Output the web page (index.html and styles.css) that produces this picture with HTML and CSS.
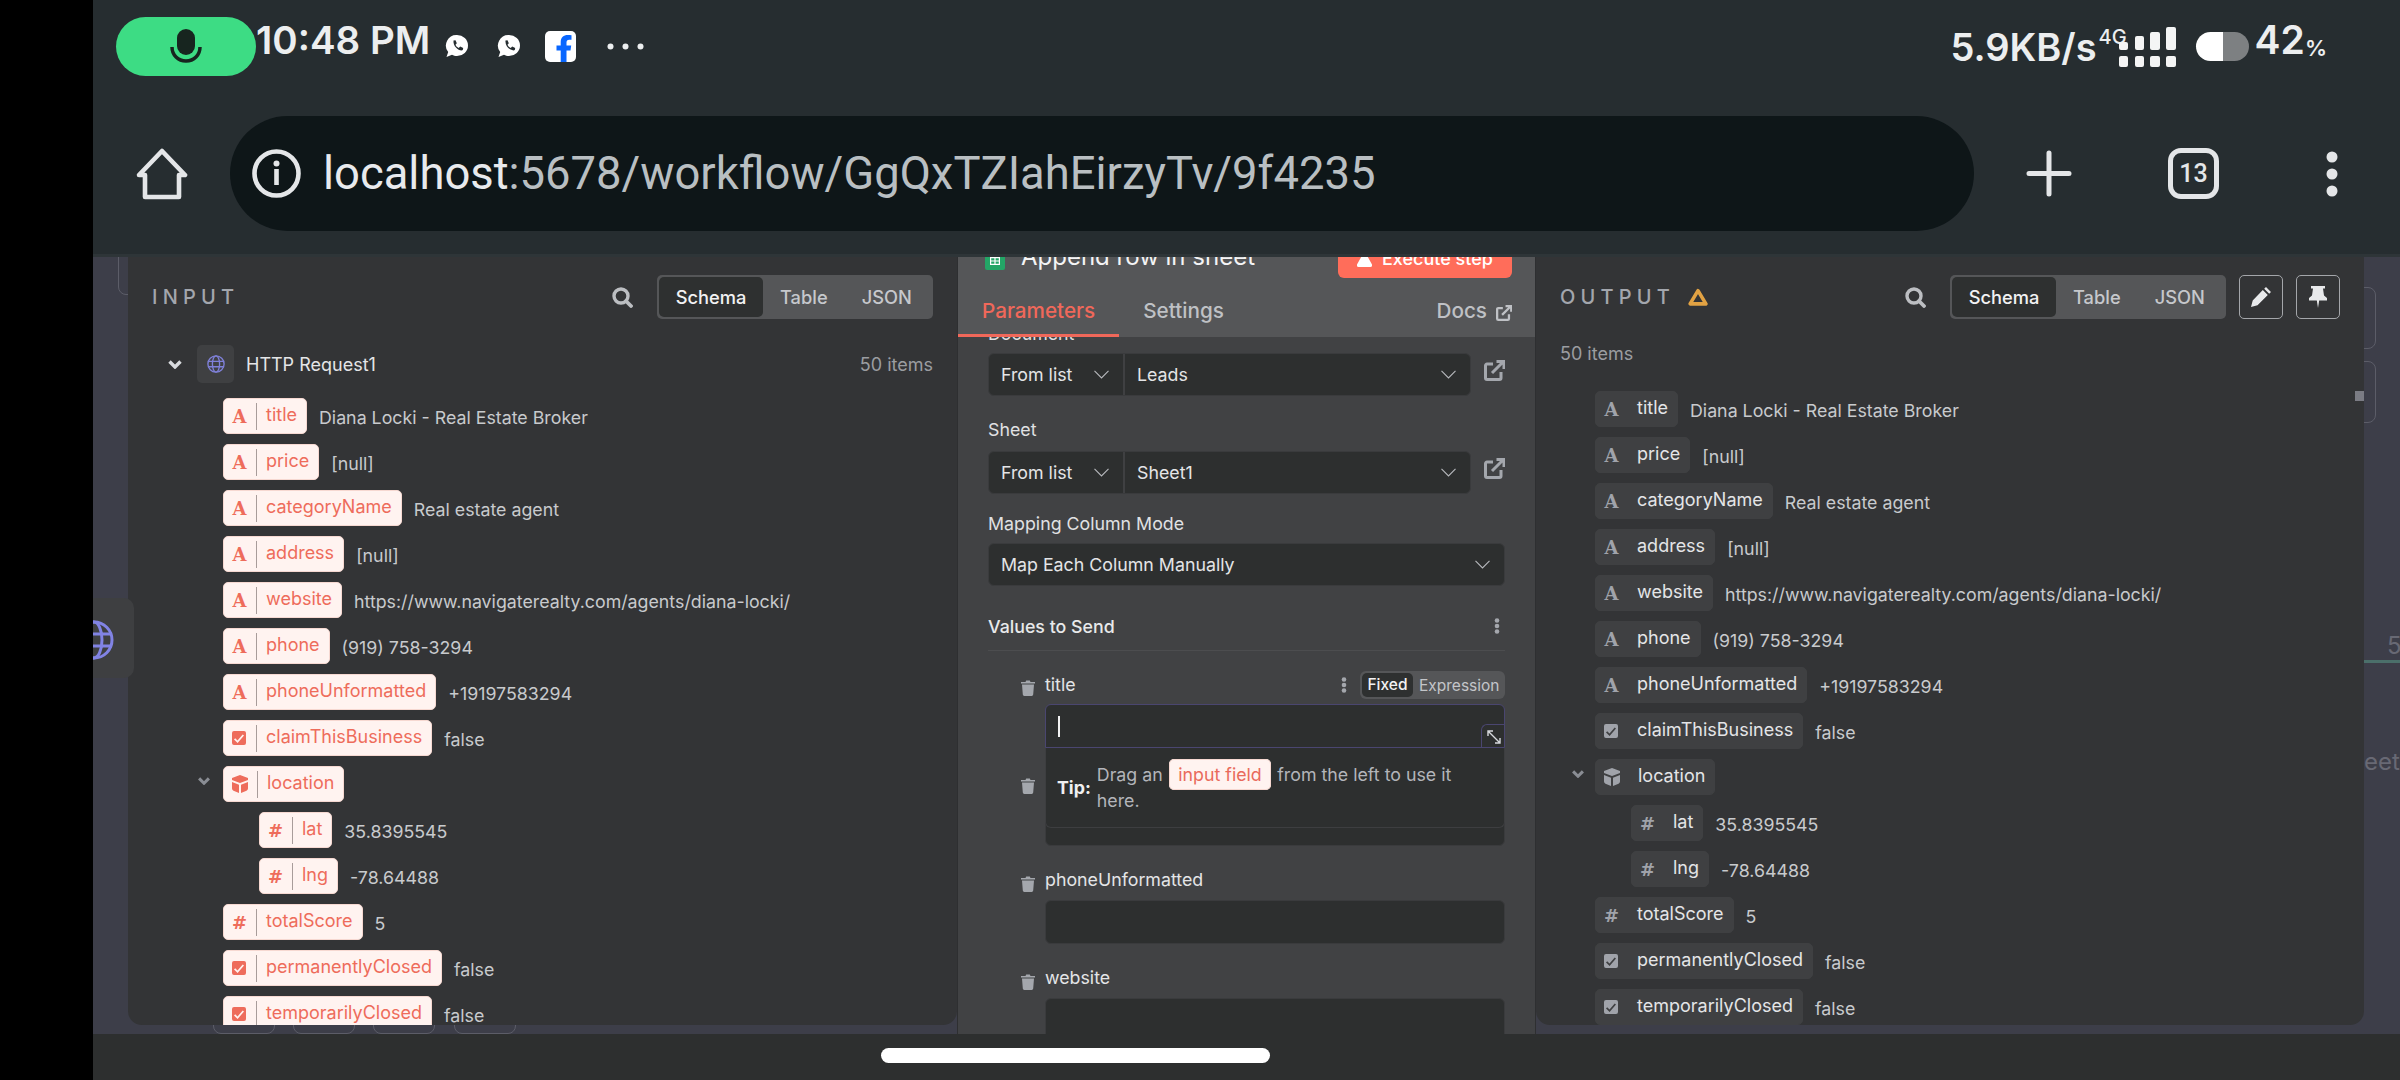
FILE: index.html
```html
<!DOCTYPE html>
<html lang="en">
<head>
    <meta charset="UTF-8">
    <title>Append row in sheet</title>
    <link rel="stylesheet" href="styles.css">
</head>
<body>
<svg class="defs" width="0" height="0">
    <symbol id="i-check" viewBox="0 0 14 16"><path fill="currentColor" fill-rule="evenodd" d="M2 1h10a2 2 0 0 1 2 2v10a2 2 0 0 1-2 2H2a2 2 0 0 1-2-2V3a2 2 0 0 1 2-2zm1.2 7.2L2 9.6 5.6 13 12 5.6 10.7 4.4 5.5 10.4z"/></symbol>
    <symbol id="i-cube" viewBox="0 0 16 18"><path fill="currentColor" d="M8 0l8 3v2L8 8 0 5V3zM0 7l7 2.700V18l-5.500-2.200A2.400 2.400 0 0 1 0 13.600zM16 7v6.600a2.400 2.400 0 0 1-1.500 2.200L9 18V9.700z"/></symbol>
    <symbol id="i-chev" viewBox="0 0 14 9"><path fill="none" stroke="currentColor" stroke-width="3.400" d="M1.500 1.500L7 7l5.500-5.500"/></symbol>
    <symbol id="i-down" viewBox="0 0 15 9"><path fill="none" stroke="currentColor" stroke-width="1.100" d="M.5.800L7.500 8l7-7.200"/></symbol>
    <symbol id="i-search" viewBox="0 0 21 21"><circle cx="9" cy="9" r="7" fill="none" stroke="currentColor" stroke-width="3.400"/><path stroke="currentColor" stroke-width="3.800" stroke-linecap="round" d="M14 14l5 5"/></symbol>
    <symbol id="i-ext" viewBox="0 0 21 21"><path fill="none" stroke="currentColor" stroke-width="3" d="M9 4H3a1.500 1.500 0 0 0-1.500 1.500V18A1.500 1.500 0 0 0 3 19.500h12.500A1.500 1.500 0 0 0 17 18v-6M8 13L19 2M12.500 1.500h7.500V9"/></symbol>
    <symbol id="i-dots" viewBox="0 0 6 16"><circle cx="3" cy="2.500" r="2.300" fill="currentColor"/><circle cx="3" cy="8" r="2.300" fill="currentColor"/><circle cx="3" cy="13.500" r="2.300" fill="currentColor"/></symbol>
    <symbol id="i-trash" viewBox="0 0 14 16"><path fill="currentColor" d="M0 2h4.500l.7-1.500h3.600L9.500 2H14v1.500H0zM1 4.500h12l-.8 10.100a1.500 1.500 0 0 1-1.500 1.400H3.300a1.500 1.500 0 0 1-1.500-1.400z"/></symbol>
    <symbol id="i-globe" viewBox="0 0 40 40"><g fill="none" stroke="currentColor" stroke-width="3"><circle cx="20" cy="20" r="18"/><ellipse cx="20" cy="20" rx="8" ry="18"/><path d="M2 14h36M2 26h36"/></g></symbol>
    <symbol id="i-wa" viewBox="0 0 24 24"><path fill="#fff" d="M12 1a11 10.500 0 0 1 0 21c-2 0-3.500-.4-5-1.200L1.500 23l1.700-5A10.500 10.500 0 0 1 12 1z"/><path fill="#262d30" d="M8.500 6.500l2 -.3 1.300 3-1.300 1.500c.6 1.500 1.700 2.500 3.200 3.200l1.500-1.300 3 1.500-.4 2c-3 1.500-10-3-9.300-9.600z"/></symbol>
</svg>

<div class="screen">
    <div class="edge"></div>
    <div class="phone">
        <div class="statusbar">
            <div class="mic">
                <svg width="32" height="34" viewBox="0 0 32 34"><rect x="7" y="0" width="18" height="26" rx="9" fill="#17251f"/><path d="M2 18c0 8 6 14 14 14s14-6 14-14" fill="none" stroke="#17251f" stroke-width="3.500"/></svg>
            </div>
            <span class="clock">10:48 PM</span>
            <svg class="wa wa-first" width="24" height="24"><use href="#i-wa"/></svg>
            <svg class="wa wa-second" width="24" height="24"><use href="#i-wa"/></svg>
            <svg class="fb" width="31" height="31" viewBox="0 0 31 31"><rect width="31" height="31" rx="5" fill="#fff"/><path fill="#0866ff" d="M21.500 31V19.500h4l.7-5h-4.700v-3c0-1.500.7-2.700 2.800-2.700H26.500V4.200C25.500 4 24 4 22.800 4c-4.200 0-7.100 2.600-7.100 7.100v3.400H11.500v5h4.200V31z"/></svg>
            <svg class="more" width="37" height="7" viewBox="0 0 37 7"><circle cx="3.500" cy="3.500" r="3" fill="#eceeef"/><circle cx="18.500" cy="3.500" r="3" fill="#eceeef"/><circle cx="33.500" cy="3.500" r="3" fill="#eceeef"/></svg>
            <div class="status-right">
                <span class="speed">5.9KB/s</span>
                <span class="net">4G</span>
                <svg class="signal" width="57" height="40" viewBox="0 0 57 40">
                    <g fill="#f4f5f5">
                        <rect x="0" y="15" width="9" height="8" rx="2"/><rect x="16" y="9" width="9" height="14" rx="2"/><rect x="31" y="5" width="10" height="18" rx="2"/><rect x="47" y="0" width="10" height="23" rx="2"/>
                        <rect x="0" y="29" width="9" height="11" rx="2"/><rect x="16" y="29" width="9" height="11" rx="2"/><rect x="31" y="29" width="10" height="11" rx="2"/><rect x="47" y="29" width="10" height="11" rx="2"/>
                    </g>
                </svg>
                <div class="battery"></div>
                <span class="level">42</span><span class="pct">%</span>
            </div>
        </div>

        <div class="toolbar">
            <svg class="home" width="52" height="52" viewBox="0 0 52 52"><path fill="none" stroke="#e4e6e8" stroke-width="4.600" stroke-linejoin="round" d="M26 3L49 27h-6v22H9V27H3z"/></svg>
            <div class="urlbar">
                <svg width="49" height="49" viewBox="0 0 49 49"><circle cx="24.500" cy="24.500" r="22" fill="none" stroke="#e4e6e8" stroke-width="4.600"/><circle cx="24.500" cy="14.500" r="3" fill="#e4e6e8"/><rect x="22.200" y="20" width="4.600" height="16" fill="#e4e6e8"/></svg>
                <span class="url"><span class="host">localhost</span>:5678/workflow/GgQxTZIahEirzyTv/9f4235</span>
            </div>
            <svg class="plus" width="46" height="47" viewBox="0 0 46 47"><path stroke="#e4e6e8" stroke-width="5" stroke-linecap="round" d="M23 3v41M3 23.500h40"/></svg>
            <div class="tabcount">13</div>
            <svg class="kebab" width="12" height="46" viewBox="0 0 12 46"><circle cx="6" cy="6" r="5.500" fill="#e4e6e8"/><circle cx="6" cy="23" r="5.500" fill="#e4e6e8"/><circle cx="6" cy="40" r="5.500" fill="#e4e6e8"/></svg>
        </div>

        <div class="stage">
            <!-- things left on the canvas behind the panels -->
            <div class="bit bit-a"></div>
            <div class="bit bit-b"></div><div class="bit bit-c"></div><div class="bit bit-d"></div><div class="bit bit-e"></div>
            <div class="bit bit-f"></div><div class="bit bit-g"></div>
            <div class="bit-square"></div>
            <div class="bit-strip"></div>
            <span class="bit-text bit-five">5</span>
            <span class="bit-text bit-sheet">eet</span>

            <div class="side-tab"><svg width="40" height="40"><use href="#i-globe"/></svg></div>

            <section class="panel panel-input">
                <div class="panel-head">
                    <span class="panel-title">INPUT</span>
                    <svg class="search" width="21" height="21"><use href="#i-search"/></svg>
                    <div class="seg"><span class="seg-item active">Schema</span><span class="seg-item">Table</span><span class="seg-item">JSON</span></div>
                </div>
                <div class="source">
                    <svg class="chev source-chev" width="16" height="9"><use href="#i-chev"/></svg>
                    <div class="source-icon"><svg width="18" height="20" viewBox="0 0 40 40"><use href="#i-globe"/></svg></div>
                    <span class="source-name">HTTP Request1</span>
                    <span class="source-count">50 items</span>
                </div>
                <div class="schema">
                    <div class="row"><span class="pill"><b class="ico">A</b><i></i><span>title</span></span><span class="val">Diana Locki - Real Estate Broker</span></div>
                    <div class="row"><span class="pill"><b class="ico">A</b><i></i><span>price</span></span><span class="val">[null]</span></div>
                    <div class="row"><span class="pill"><b class="ico">A</b><i></i><span>categoryName</span></span><span class="val">Real estate agent</span></div>
                    <div class="row"><span class="pill"><b class="ico">A</b><i></i><span>address</span></span><span class="val">[null]</span></div>
                    <div class="row"><span class="pill"><b class="ico">A</b><i></i><span>website</span></span><span class="val">https://www.navigaterealty.com/agents/diana-locki/</span></div>
                    <div class="row"><span class="pill"><b class="ico">A</b><i></i><span>phone</span></span><span class="val">(919) 758-3294</span></div>
                    <div class="row"><span class="pill"><b class="ico">A</b><i></i><span>phoneUnformatted</span></span><span class="val">+19197583294</span></div>
                    <div class="row"><span class="pill"><svg class="ico-svg" width="14" height="16"><use href="#i-check"/></svg><i></i><span>claimThisBusiness</span></span><span class="val">false</span></div>
                    <div class="row"><svg class="chev row-chev" width="14" height="8"><use href="#i-chev"/></svg><span class="pill pill-obj"><svg class="ico-svg" width="16" height="18"><use href="#i-cube"/></svg><i></i><span>location</span></span></div>
                    <div class="row nested"><span class="pill"><b class="ico hash">#</b><i></i><span>lat</span></span><span class="val">35.8395545</span></div>
                    <div class="row nested"><span class="pill"><b class="ico hash">#</b><i></i><span>lng</span></span><span class="val">-78.64488</span></div>
                    <div class="row"><span class="pill"><b class="ico hash">#</b><i></i><span>totalScore</span></span><span class="val">5</span></div>
                    <div class="row"><span class="pill"><svg class="ico-svg" width="14" height="16"><use href="#i-check"/></svg><i></i><span>permanentlyClosed</span></span><span class="val">false</span></div>
                    <div class="row"><span class="pill"><svg class="ico-svg" width="14" height="16"><use href="#i-check"/></svg><i></i><span>temporarilyClosed</span></span><span class="val">false</span></div>
                </div>
            </section>

            <section class="panel-main">
                <div class="main-head">
                    <div class="node-title">
                        <svg class="sheet-ico" width="20" height="26" viewBox="0 0 20 26"><rect width="20" height="26" rx="2" fill="#23a566"/><path fill="#fff" d="M5 13h10v8H5zm1.200 1.200v2.200h3.200v-2.200zm4.400 0v2.200h3.200v-2.200zm-4.400 3.400v2.200h3.200v-2.200zm4.400 0v2.200h3.200v-2.200z"/></svg>
                        <span class="node-name">Append row in sheet</span>
                        <button class="exec"><svg width="15" height="18" viewBox="0 0 15 18"><path fill="#fff" d="M4.500 0h6v1.500H10v5l5 9a1.700 1.700 0 0 1-1.500 2.500h-12A1.700 1.700 0 0 1 0 15.500l5-9v-5h-.5z"/></svg>Execute step</button>
                    </div>
                    <div class="tabs">
                        <span class="tab current">Parameters</span>
                        <span class="tab">Settings</span>
                        <span class="docs">Docs<svg width="16" height="16"><use href="#i-ext"/></svg></span>
                    </div>
                </div>
                <div class="form">
                    <label class="lbl lbl-first">Document</label>
                    <div class="locator">
                        <div class="select"><div class="sel sel-mode"><span>From list</span><svg width="15" height="9"><use href="#i-down"/></svg></div><div class="sel sel-value"><span>Leads</span><svg width="15" height="9"><use href="#i-down"/></svg></div></div>
                        <svg class="open" width="21" height="21"><use href="#i-ext"/></svg>
                    </div>
                    <label class="lbl lbl-sheet">Sheet</label>
                    <div class="locator">
                        <div class="select"><div class="sel sel-mode"><span>From list</span><svg width="15" height="9"><use href="#i-down"/></svg></div><div class="sel sel-value"><span>Sheet1</span><svg width="15" height="9"><use href="#i-down"/></svg></div></div>
                        <svg class="open" width="21" height="21"><use href="#i-ext"/></svg>
                    </div>
                    <label class="lbl lbl-mode">Mapping Column Mode</label>
                    <div class="select"><div class="sel sel-value"><span>Map Each Column Manually</span><svg width="15" height="9"><use href="#i-down"/></svg></div></div>
                    <div class="values-head">
                        <span>Values to Send</span>
                        <svg width="6" height="16"><use href="#i-dots"/></svg>
                    </div>

                    <div class="param param-open">
                        <svg class="trash" width="14" height="16"><use href="#i-trash"/></svg>
                        <div class="param-body">
                            <div class="param-head">
                                <span>title</span>
                                <svg class="param-dots" width="6" height="16"><use href="#i-dots"/></svg>
                                <div class="toggle"><span class="toggle-on">Fixed</span><span class="toggle-off">Expression</span></div>
                            </div>
                            <div class="input focus">
                                <span class="caret"></span>
                                <span class="expand"><svg width="14" height="14" viewBox="0 0 14 14"><path fill="none" stroke="#d8dade" stroke-width="1.400" d="M6 1H1v5M1 1l12 12M8 13h5V8"/></svg></span>
                                <div class="tip">
                                    <strong>Tip:</strong>
                                    <p>Drag an <span class="tip-pill">input field</span> from the left to use it here.</p>
                                </div>
                            </div>
                        </div>
                    </div>
                    <div class="param">
                        <svg class="trash" width="14" height="16"><use href="#i-trash"/></svg>
                        <div class="param-body"><div class="param-label">phone</div><div class="input"></div></div>
                    </div>
                    <div class="param">
                        <svg class="trash" width="14" height="16"><use href="#i-trash"/></svg>
                        <div class="param-body"><div class="param-label">phoneUnformatted</div><div class="input"></div></div>
                    </div>
                    <div class="param">
                        <svg class="trash" width="14" height="16"><use href="#i-trash"/></svg>
                        <div class="param-body"><div class="param-label">website</div><div class="input"></div></div>
                    </div>
                </div>
            </section>

            <section class="panel panel-output">
                <div class="panel-head">
                    <span class="panel-title">OUTPUT</span>
                    <svg class="warn" width="20" height="18" viewBox="0 0 19 17"><path fill="none" stroke="#e2a243" stroke-width="3.400" stroke-linejoin="round" d="M9.500 2.500L17 15H2z"/></svg>
                    <svg class="search" width="21" height="21"><use href="#i-search"/></svg>
                    <div class="seg"><span class="seg-item active">Schema</span><span class="seg-item">Table</span><span class="seg-item">JSON</span></div>
                    <button class="icon-btn"><svg width="22" height="22" viewBox="0 0 22 22"><path fill="#e8e9eb" d="M16 1l5 5-1.800 1.800-5-5zM12.800 4l5 5L7.500 19.300 1 21l1.700-6.500z"/></svg></button>
                    <button class="icon-btn"><svg width="18" height="22" viewBox="0 0 18 22"><path fill="#e8e9eb" d="M2 0h14v2.500h-2l1 7 3 2.500v2.500H10.200L9 22l-1.200-7.500H0V12l3-2.500 1-7H2z"/></svg></button>
                </div>
                <div class="output-count">50 items</div>
                <div class="schema schema-out">
                    <div class="row"><span class="pill"><b class="ico">A</b><i></i><span>title</span></span><span class="val">Diana Locki - Real Estate Broker</span></div>
                    <div class="row"><span class="pill"><b class="ico">A</b><i></i><span>price</span></span><span class="val">[null]</span></div>
                    <div class="row"><span class="pill"><b class="ico">A</b><i></i><span>categoryName</span></span><span class="val">Real estate agent</span></div>
                    <div class="row"><span class="pill"><b class="ico">A</b><i></i><span>address</span></span><span class="val">[null]</span></div>
                    <div class="row"><span class="pill"><b class="ico">A</b><i></i><span>website</span></span><span class="val">https://www.navigaterealty.com/agents/diana-locki/</span></div>
                    <div class="row"><span class="pill"><b class="ico">A</b><i></i><span>phone</span></span><span class="val">(919) 758-3294</span></div>
                    <div class="row"><span class="pill"><b class="ico">A</b><i></i><span>phoneUnformatted</span></span><span class="val">+19197583294</span></div>
                    <div class="row"><span class="pill"><svg class="ico-svg" width="14" height="16"><use href="#i-check"/></svg><i></i><span>claimThisBusiness</span></span><span class="val">false</span></div>
                    <div class="row"><svg class="chev row-chev" width="14" height="8"><use href="#i-chev"/></svg><span class="pill pill-obj"><svg class="ico-svg" width="16" height="18"><use href="#i-cube"/></svg><i></i><span>location</span></span></div>
                    <div class="row nested"><span class="pill"><b class="ico hash">#</b><i></i><span>lat</span></span><span class="val">35.8395545</span></div>
                    <div class="row nested"><span class="pill"><b class="ico hash">#</b><i></i><span>lng</span></span><span class="val">-78.64488</span></div>
                    <div class="row"><span class="pill"><b class="ico hash">#</b><i></i><span>totalScore</span></span><span class="val">5</span></div>
                    <div class="row"><span class="pill"><svg class="ico-svg" width="14" height="16"><use href="#i-check"/></svg><i></i><span>permanentlyClosed</span></span><span class="val">false</span></div>
                    <div class="row"><span class="pill"><svg class="ico-svg" width="14" height="16"><use href="#i-check"/></svg><i></i><span>temporarilyClosed</span></span><span class="val">false</span></div>
                </div>
            </section>
        </div>

        <div class="navbar"><span class="handle"></span></div>
    </div>
</div>
</body>
</html>
```

FILE: styles.css
```css
* {
    margin: 0;
    padding: 0;
    box-sizing: border-box;
}

body {
    background: #000;
    font-family: Inter, "Liberation Sans", sans-serif;
    overflow: hidden;
}

.defs {
    position: absolute;
}

.screen {
    display: flex;
    width: 2400px;
    height: 1080px;
}

.edge {
    width: 93px;
    background: #000;
}

.phone {
    width: 2307px;
    display: flex;
    flex-direction: column;
}

/* status bar */
.statusbar {
    height: 116px;
    background: #262d30;
    display: flex;
    align-items: flex-start;
    padding-left: 23px;
    color: #eceeef;
    font-family: Inter, sans-serif;
    font-weight: 600;
}

.mic {
    width: 140px;
    height: 59px;
    margin-top: 17px;
    background: #3ddc84;
    border-radius: 30px;
    display: flex;
    justify-content: center;
    padding-top: 12px;
}

.clock {
    font-size: 38.500px;
    line-height: 44px;
    margin-top: 18px;
}

.wa {
    margin-top: 34px;
}

.wa-first {
    margin-left: 15px;
}

.wa-second {
    margin-left: 28px;
}

.fb {
    margin-top: 31px;
    margin-left: 24px;
}

.more {
    margin-top: 43px;
    margin-left: 31px;
}

.status-right {
    margin-left: auto;
    margin-right: 73px;
    display: flex;
    align-items: flex-start;
}

.speed {
    font-size: 38px;
    line-height: 46px;
    margin-top: 24px;
}

.net {
    font-size: 20px;
    line-height: 20px;
    margin-top: 27px;
    margin-left: 2px;
    font-weight: 500;
}

.signal {
    margin-top: 27px;
    margin-left: -8px;
}

.battery {
    width: 53px;
    height: 29px;
    margin-top: 32px;
    margin-left: 20px;
    border-radius: 15px;
    background: linear-gradient(90deg, #fff 51%, #7d8082 51%);
}

.level {
    font-size: 39px;
    line-height: 44px;
    margin-top: 18px;
    margin-left: 6px;
}

.pct {
    font-size: 22px;
    line-height: 28px;
    margin-top: 34px;
}

/* browser toolbar */
.toolbar {
    height: 138px;
    background: #262d30;
    display: flex;
    align-items: center;
    padding-bottom: 23px;
    padding-left: 43px;
}

.urlbar {
    width: 1744px;
    height: 115px;
    margin-left: 42px;
    background: #0e1618;
    border-radius: 58px;
    display: flex;
    align-items: center;
    padding-left: 22px;
}

.url {
    margin-left: 22px;
    font-family: Roboto, sans-serif;
    font-size: 45.400px;
    color: #b9bfc2;
    white-space: nowrap;
}

.host {
    color: #e8eaed;
}

.plus {
    margin-left: 52px;
}

.tabcount {
    width: 51px;
    height: 51px;
    margin-left: 96px;
    border: 5px solid #e4e6e8;
    border-radius: 13px;
    color: #e4e6e8;
    font-family: Roboto, sans-serif;
    font-weight: 500;
    font-size: 25px;
    display: flex;
    align-items: center;
    justify-content: center;
}

.kebab {
    margin-left: 107px;
}

/* canvas and panels */
.stage {
    flex: 1;
    position: relative;
    background: #3d3e49;
    display: flex;
    overflow: hidden;
    border-top: 3px solid #2e3538;
}

.bit {
    position: absolute;
    border: 1px solid #5c5d68;
    border-radius: 8px;
}

.bit-a {
    left: 25px;
    top: -20px;
    width: 40px;
    height: 58px;
}

.bit-b, .bit-c, .bit-d, .bit-e {
    top: 740px;
    height: 37px;
    width: 62px;
}

.bit-b {
    left: 120px;
}

.bit-c {
    left: 200px;
}

.bit-d {
    left: 280px;
}

.bit-e {
    left: 361px;
}

.bit-f, .bit-g {
    left: 2240px;
    width: 43px;
}

.bit-f {
    top: 30px;
    height: 62px;
}

.bit-g {
    top: 104px;
    height: 62px;
}

.bit-square {
    position: absolute;
    left: 2262px;
    top: 134px;
    width: 9px;
    height: 10px;
    background: #7b7c84;
    z-index: 3;
}

.bit-strip {
    position: absolute;
    left: 2271px;
    top: 403px;
    width: 36px;
    height: 3px;
    background: #4b6f6a;
}

.bit-text {
    position: absolute;
    color: #686974;
    font-size: 24px;
}

.bit-five {
    left: 2294px;
    top: 374px;
}

.bit-sheet {
    left: 2271px;
    top: 490px;
}

.side-tab {
    position: absolute;
    left: 0;
    top: 341px;
    width: 41px;
    height: 80px;
    background: #3e3f41;
    border-radius: 0 10px 10px 0;
    overflow: hidden;
    z-index: 4;
    color: #8183e4;
    padding-top: 22px;
}

.side-tab svg {
    margin-left: -19px;
}

.panel {
    background: #333436;
    height: 768px;
    border-radius: 0 0 14px 14px;
    overflow: hidden;
    position: relative;
    z-index: 2;
}

.panel-input {
    width: 829px;
    margin-left: 35px;
}

.panel-output {
    width: 828px;
}

.panel-head {
    display: flex;
    align-items: center;
    height: 44px;
    margin: 18px 24px 0;
}

.panel-title {
    font-size: 20px;
    letter-spacing: 5.200px;
    color: #a3a6ad;
    font-weight: 500;
}

.warn {
    margin-left: 13px;
}

.search {
    margin-left: auto;
    margin-right: 24px;
    color: #bcbec2;
}

.seg {
    width: 276px;
    height: 44px;
    padding: 2px;
    background: #555658;
    border-radius: 5px;
    display: flex;
    align-items: center;
    font-size: 18.300px;
    color: #c6c8cc;
    font-weight: 500;
}

.seg-item {
    padding: 0 17px;
    line-height: 40px;
}

.seg-item.active {
    width: 104px;
    padding: 0;
    text-align: center;
    background: #2e3030;
    color: #f2f2f3;
    border-radius: 5px;
}

.icon-btn {
    width: 44px;
    height: 44px;
    margin-left: 13px;
    background: transparent;
    border: 1px solid #a4a6aa;
    border-radius: 5px;
    display: flex;
    align-items: center;
    justify-content: center;
}

.source {
    display: flex;
    align-items: center;
    margin: 26px 24px 0 39px;
    height: 38px;
}

.chev {
    color: #d8dade;
}

.source-icon {
    width: 37px;
    height: 38px;
    margin-left: 14px;
    background: #3f4042;
    border-radius: 5px;
    color: #7f80d8;
    display: flex;
    align-items: center;
    justify-content: center;
}

.source-name {
    margin-left: 12px;
    font-size: 18px;
    color: #e4e5e7;
}

.source-count, .output-count {
    font-size: 18px;
    color: #9b9da1;
}

.source-count {
    margin-left: auto;
}

.output-count {
    margin: 24px 24px 0;
    line-height: 22px;
}

.schema {
    margin-top: 15px;
    padding-left: 95px;
    display: flex;
    flex-direction: column;
    gap: 10px;
}

.schema-out {
    margin-top: 26px;
    padding-left: 59px;
}

.row {
    display: flex;
    height: 36px;
    flex-shrink: 0;
}

.nested {
    padding-left: 36px;
}

.row-chev {
    margin-left: -26px;
    margin-right: 12px;
    margin-top: 11px;
    color: #8a8d94;
}

.schema-out .row-chev {
    margin-left: -24px;
    margin-right: 10px;
    margin-top: 11px;
}

.pill {
    height: 36px;
    display: flex;
    align-items: center;
    padding: 0 9px 0 9px;
    background: #fff3f0;
    border: 1px solid #f6d8d1;
    border-radius: 5px;
    color: #ee6c5b;
    font-size: 18px;
    white-space: nowrap;
}

.pill > span {
    margin-top: -4px;
}

.pill i {
    width: 1px;
    height: 27px;
    margin: 0 9px 0 10px;
    background: #a89c9a;
}

.ico {
    width: 13px;
    font-family: "DejaVu Serif", serif;
    font-weight: 700;
    font-size: 18px;
    display: flex;
    justify-content: center;
}

.hash {
    font-family: "DejaVu Sans", sans-serif;
}

.ico-svg {
    flex-shrink: 0;
    margin-left: -1px;
}

.pill-obj i {
    margin-left: 9px;
}

.val {
    margin-left: 12px;
    margin-top: 3px;
    font-size: 17.800px;
    line-height: 33px;
    color: #c8cacd;
    white-space: nowrap;
}

.schema-out .pill {
    background: #3f4042;
    border-color: #3f4042;
    color: #e4e5e7;
}

.schema-out .pill i {
    background: transparent;
    margin-right: 8px;
}

.schema-out .ico, .schema-out .ico-svg {
    color: #a0a3aa;
}

/* middle column */
.panel-main {
    width: 579px;
    background: #414244;
    display: flex;
    flex-direction: column;
    overflow: hidden;
    position: relative;
    z-index: 3;
    border-left: 1px solid #2e2f31;
    border-right: 1px solid #2e2f31;
}

.main-head {
    height: 80px;
    flex-shrink: 0;
    background: #555658;
    position: relative;
    z-index: 1;
}

.node-title {
    height: 21px;
    display: flex;
    align-items: flex-end;
    padding: 0 23px 0 27px;
    color: #f4f4f5;
}

.sheet-ico {
    flex-shrink: 0;
    margin-bottom: 8px;
}

.node-name {
    margin-left: 16px;
    margin-bottom: 6px;
    font-size: 24px;
    line-height: 30px;
    white-space: nowrap;
}

.exec {
    margin-left: auto;
    width: 174px;
    height: 40px;
    flex-shrink: 0;
    background: #ff6d5a;
    color: #fff;
    border: 0;
    border-radius: 6px;
    font-family: Inter, sans-serif;
    font-size: 18px;
    font-weight: 500;
    display: flex;
    align-items: center;
    justify-content: center;
    gap: 10px;
}

.tabs {
    height: 59px;
    display: flex;
    align-items: flex-end;
    font-size: 20.700px;
    font-weight: 500;
    color: #bfc1c5;
}

.tab {
    padding: 3px 24px 10px;
    line-height: 26px;
    border-bottom: 3px solid transparent;
}

.tab.current {
    color: #f0685a;
    border-bottom-color: #f0685a;
}

.docs {
    margin-left: auto;
    padding: 0 23px 13px 0;
    line-height: 26px;
    display: flex;
    align-items: center;
    gap: 9px;
}

.docs svg {
    margin-top: 4px;
}

.form {
    flex: 1;
    overflow: hidden;
    padding: 0 30px;
    color: #e4e5e7;
    font-size: 17.800px;
}

.lbl {
    display: block;
    line-height: 22px;
    color: #e0e1e3;
}

.lbl-first {
    margin-top: -14px;
    margin-bottom: 8px;
}

.lbl-sheet {
    margin-top: 23px;
    margin-bottom: 10px;
}

.lbl-mode {
    margin-top: 19px;
    margin-bottom: 8px;
}

.locator {
    display: flex;
    align-items: flex-start;
}

.open {
    margin-left: 13px;
    margin-top: 7px;
    color: #a4a7ad;
    flex-shrink: 0;
}

.select {
    flex: 1;
    height: 43px;
    display: flex;
    background: #2d2f2f;
    border: 1px solid #3a3b3d;
    border-radius: 6px;
}

.sel {
    display: flex;
    align-items: center;
    justify-content: space-between;
    padding: 0 14px 0 12px;
}

.sel-mode {
    width: 136px;
    border-right: 2px solid #3f4042;
}

.sel-value {
    flex: 1;
}

.sel svg {
    color: #b7b9bd;
}

.values-head {
    display: flex;
    justify-content: space-between;
    align-items: center;
    margin-top: 29px;
    height: 22px;
    padding-bottom: 13px;
    border-bottom: 1px solid #4c4d4f;
    font-weight: 500;
    color: #e8e9ea;
    box-sizing: content-box;
}

.values-head svg {
    margin-right: 5px;
    color: #a4a7ad;
}

.param {
    display: flex;
    align-items: flex-start;
    padding-left: 33px;
    margin-top: 23px;
}

.param-open {
    margin-top: 20px;
}

.trash {
    flex-shrink: 0;
    color: #a4a7ad;
    margin-top: 7px;
    margin-right: 10px;
}

.param-open .trash {
    margin-top: 9px;
}

.param-body {
    flex: 1;
}

.param-head {
    display: flex;
    align-items: center;
    height: 28px;
    margin-bottom: 5px;
}

.param-head > span {
    margin-top: -2px;
}

.param-label {
    line-height: 22px;
    margin-bottom: 9px;
}

.param-dots {
    margin-left: auto;
    margin-right: 13px;
    color: #a4a7ad;
}

.toggle {
    width: 145px;
    height: 28px;
    padding: 2px;
    background: #555658;
    border-radius: 6px;
    display: flex;
    align-items: center;
    font-size: 15.500px;
}

.toggle-on {
    width: 51px;
    line-height: 24px;
    text-align: center;
    background: #2e3030;
    border-radius: 5px;
    font-weight: 500;
    color: #f2f2f3;
}

.toggle-off {
    margin-left: 6px;
    color: #c3c5c9;
}

.input {
    height: 44px;
    background: #2d2f2f;
    border: 1px solid #3a3b3d;
    border-radius: 6px;
    position: relative;
}

.input.focus {
    border-color: #4a4670;
    border-bottom-left-radius: 0;
    border-bottom-right-radius: 0;
    display: flex;
    align-items: center;
    padding-left: 12px;
}

.caret {
    width: 2px;
    height: 21px;
    background: #f2f2f3;
}

.expand {
    position: absolute;
    right: -1px;
    bottom: -1px;
    width: 24px;
    height: 24px;
    border: 1px solid #4a4670;
    border-bottom: 0;
    border-right: 0;
    border-top-left-radius: 6px;
    display: flex;
    align-items: center;
    justify-content: center;
}

.tip {
    position: absolute;
    left: -1px;
    right: -1px;
    top: 43px;
    height: 80px;
    background: #2d2f2f;
    border: 1px solid #3d3e40;
    border-top: 0;
    border-radius: 0 0 6px 6px;
    display: flex;
    align-items: center;
    padding: 0 10px 0 11px;
    z-index: 2;
}

.tip strong {
    font-weight: 700;
    color: #f0f0f1;
    flex-shrink: 0;
    margin-right: 6px;
}

.tip p {
    line-height: 26px;
    color: #b3b5ba;
}

.tip-pill {
    padding: 4px 8.500px;
    margin: 0 1px;
    background: #fff3f0;
    border: 1px solid #f6d8d1;
    border-radius: 5px;
    color: #e96a5b;
}

/* bottom */
.navbar {
    height: 46px;
    background: #2d2f2f;
    display: flex;
    position: relative;
    z-index: 5;
}

.handle {
    width: 389px;
    height: 15px;
    margin-top: 14px;
    margin-left: 788px;
    background: #fff;
    border-radius: 8px;
}
```
